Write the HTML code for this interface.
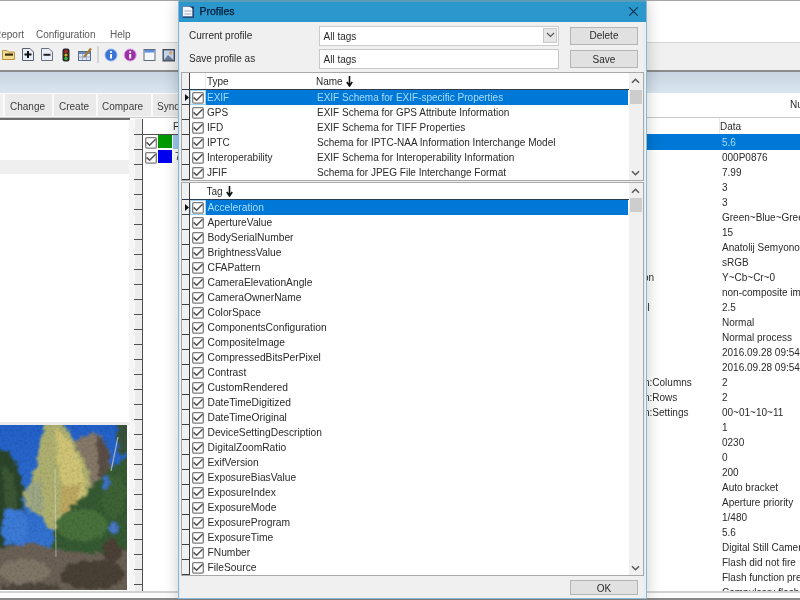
<!DOCTYPE html>
<html><head><meta charset="utf-8">
<style>
*{margin:0;padding:0;box-sizing:border-box}
html,body{width:800px;height:600px;overflow:hidden;background:#fff}
body{position:relative;font-family:"Liberation Sans",sans-serif;font-size:10px;color:#2a2a2a}
.a{position:absolute}
.t{position:absolute;white-space:nowrap;line-height:15px;height:15px}
#root{position:absolute;left:0;top:0;width:800px;height:600px;will-change:transform}
</style></head><body><div id="root">
<div class="a" style="left:0px;top:0px;width:800px;height:1px;background:#a6a6a6"></div>
<div class="a" style="left:0px;top:1px;width:800px;height:41px;background:#fff"></div>
<div class="t" style="left:-6px;top:27px;color:#5a5a5a">Report</div>
<div class="t" style="left:36px;top:27px;color:#5a5a5a">Configuration</div>
<div class="t" style="left:110px;top:27px;color:#5a5a5a">Help</div>
<div class="a" style="left:0px;top:42px;width:800px;height:1px;background:#d4d4d4"></div>
<div class="a" style="left:0px;top:43px;width:800px;height:27px;background:#f0f0f0"></div>
<div class="a" style="left:0px;top:70px;width:800px;height:2px;background:#8c8c8c"></div>
<div class="a" style="left:0px;top:72px;width:800px;height:21px;background:linear-gradient(#c8d5e2,#dae5ef)"></div>
<svg class="a" style="left:0;top:44px" width="180" height="24" viewBox="0 44 180 24"><path d="M2.5 50.5 H7 L8.5 52 H14.5 V59.5 H2.5Z" fill="#f3dc94" stroke="#b8953e"/><rect x="5" y="53.5" width="8" height="2.2" fill="#3b2c05"/><path d="M22.5 48.5 H30 L33.5 52 V60.5 H22.5Z" fill="#e9eef8" stroke="#5a6070"/><path d="M24.5 54.5 H31.5 M28 51 V58" stroke="#111" stroke-width="2"/><path d="M41.5 48.5 H49 L52.5 52 V60.5 H41.5Z" fill="#e9eef8" stroke="#6a7080"/><path d="M43.5 54.8 H50.5" stroke="#222" stroke-width="2"/><rect x="62.5" y="48.5" width="7" height="13" rx="2" fill="#2a2a2a"/><circle cx="66" cy="51.5" r="1.6" fill="#d02020"/><circle cx="66" cy="55" r="1.6" fill="#d8b020"/><circle cx="66" cy="58.5" r="1.7" fill="#30c030"/><rect x="78.5" y="51.5" width="12" height="9" fill="#dfe8f6" stroke="#5a6a8a"/><rect x="79" y="52" width="11" height="2" fill="#6c8cc0"/><path d="M82.5 54 V60 M86.5 54 V60 M79 57 H90" stroke="#8aa0c8" stroke-width="0.8"/><path d="M84 57 L91 48.5" stroke="#a87a30" stroke-width="2.2"/><rect x="97.5" y="46" width="1" height="17" fill="#b9b9b9"/><circle cx="111" cy="55" r="6" fill="#3a74d6" stroke="#8fb0ec" stroke-width="1"/><rect x="110" y="54" width="2" height="4.5" fill="#fff"/><circle cx="111" cy="52" r="1.1" fill="#fff"/><circle cx="130.2" cy="55" r="6" fill="#9a2fa8" stroke="#d99be0" stroke-width="1"/><rect x="129.2" y="54" width="2" height="4.5" fill="#fff"/><circle cx="130.2" cy="52" r="1.1" fill="#fff"/><rect x="144" y="49.5" width="11" height="11" fill="#f4f7fc" stroke="#606a7a"/><rect x="144.5" y="50" width="10" height="2.5" fill="#5a8ee0"/><rect x="163" y="49.5" width="11.5" height="11.5" fill="#5a6a80" stroke="#444c5a"/><rect x="164" y="50.5" width="9.5" height="9.5" fill="#c8d8ec"/><circle cx="170.5" cy="52.8" r="1.6" fill="#e0a070"/><path d="M164 60 L168 55 L173.5 60Z" fill="#6a7a98"/></svg>
<div class="a" style="left:0px;top:93px;width:800px;height:25px;background:#fff"></div>
<div class="a" style="left:0px;top:93px;width:178px;height:24px;background:#f0f0f0"></div>
<div class="a" style="left:0px;top:93px;width:178px;height:1px;background:#fbfbfb"></div>
<div class="a" style="left:3px;top:94px;width:49px;height:22px;background:#eaeaea;border-left:2px solid #fafafa"></div>
<div class="a" style="left:52px;top:94px;width:44px;height:22px;background:#eaeaea;border-left:2px solid #fafafa"></div>
<div class="a" style="left:96px;top:94px;width:55px;height:22px;background:#eaeaea;border-left:2px solid #fafafa"></div>
<div class="a" style="left:151px;top:94px;width:40px;height:22px;background:#eaeaea;border-left:2px solid #fafafa"></div>
<div class="a" style="left:0px;top:116px;width:178px;height:2px;background:#f8f8f8"></div>
<div class="t" style="left:10px;top:99px;color:#3c3c3c">Change</div>
<div class="t" style="left:59px;top:99px;color:#3c3c3c">Create</div>
<div class="t" style="left:102px;top:99px;color:#3c3c3c">Compare</div>
<div class="t" style="left:157px;top:99px;color:#3c3c3c">Sync</div>
<div class="t" style="left:790px;top:97px;">Nu</div>
<div class="a" style="left:0px;top:117px;width:800px;height:1px;background:#c9c9c9"></div>
<div class="a" style="left:0px;top:118px;width:130px;height:2px;background:#6e6e6e"></div>
<div class="a" style="left:129px;top:120px;width:5px;height:472px;background:#f6f6f6"></div>
<div class="a" style="left:0px;top:422px;width:129px;height:3px;background:#ebebeb"></div>
<div class="a" style="left:0px;top:160px;width:129px;height:14px;background:#efefef"></div>
<div class="a" style="left:134px;top:119px;width:9px;height:473px;background:#ececec;border-left:1px solid #fafafa"></div>
<div class="a" style="left:142px;top:119px;width:1px;height:473px;background:#505050"></div>
<div class="a" style="left:134px;top:134px;width:9px;height:1px;background:#505050"></div>
<div class="a" style="left:134px;top:149px;width:9px;height:1px;background:#505050"></div>
<div class="a" style="left:134px;top:164px;width:9px;height:1px;background:#505050"></div>
<div class="a" style="left:134px;top:179px;width:9px;height:1px;background:#505050"></div>
<div class="a" style="left:134px;top:194px;width:9px;height:1px;background:#505050"></div>
<div class="a" style="left:134px;top:209px;width:9px;height:1px;background:#505050"></div>
<div class="a" style="left:134px;top:224px;width:9px;height:1px;background:#505050"></div>
<div class="a" style="left:134px;top:239px;width:9px;height:1px;background:#505050"></div>
<div class="a" style="left:134px;top:254px;width:9px;height:1px;background:#505050"></div>
<div class="a" style="left:134px;top:269px;width:9px;height:1px;background:#505050"></div>
<div class="a" style="left:134px;top:284px;width:9px;height:1px;background:#505050"></div>
<div class="a" style="left:134px;top:299px;width:9px;height:1px;background:#505050"></div>
<div class="a" style="left:134px;top:314px;width:9px;height:1px;background:#505050"></div>
<div class="a" style="left:134px;top:329px;width:9px;height:1px;background:#505050"></div>
<div class="a" style="left:134px;top:344px;width:9px;height:1px;background:#505050"></div>
<div class="a" style="left:134px;top:359px;width:9px;height:1px;background:#505050"></div>
<div class="a" style="left:134px;top:374px;width:9px;height:1px;background:#505050"></div>
<div class="a" style="left:134px;top:389px;width:9px;height:1px;background:#505050"></div>
<div class="a" style="left:134px;top:404px;width:9px;height:1px;background:#505050"></div>
<div class="a" style="left:134px;top:419px;width:9px;height:1px;background:#505050"></div>
<div class="a" style="left:134px;top:434px;width:9px;height:1px;background:#505050"></div>
<div class="a" style="left:134px;top:449px;width:9px;height:1px;background:#505050"></div>
<div class="a" style="left:134px;top:464px;width:9px;height:1px;background:#505050"></div>
<div class="a" style="left:134px;top:479px;width:9px;height:1px;background:#505050"></div>
<div class="a" style="left:134px;top:494px;width:9px;height:1px;background:#505050"></div>
<div class="a" style="left:134px;top:509px;width:9px;height:1px;background:#505050"></div>
<div class="a" style="left:134px;top:524px;width:9px;height:1px;background:#505050"></div>
<div class="a" style="left:134px;top:539px;width:9px;height:1px;background:#505050"></div>
<div class="a" style="left:134px;top:554px;width:9px;height:1px;background:#505050"></div>
<div class="a" style="left:134px;top:569px;width:9px;height:1px;background:#505050"></div>
<div class="a" style="left:134px;top:584px;width:9px;height:1px;background:#505050"></div>
<div class="a" style="left:143px;top:134px;width:35px;height:1px;background:#505050"></div>
<svg class="a" style="left:145px;top:137px" width="12" height="12" viewBox="0 0 12 12"><rect x="0.7" y="0.7" width="10.6" height="10.4" rx="1" fill="#fff" stroke="#7c7c7c" stroke-width="1.3"/><path d="M1.6 5.4 L4.6 8.3 L10.6 2.3" fill="none" stroke="#505050" stroke-width="1.5"/></svg>
<div class="a" style="left:158px;top:135px;width:14px;height:13px;background:#009a00"></div>
<svg class="a" style="left:145px;top:152px" width="12" height="12" viewBox="0 0 12 12"><rect x="0.7" y="0.7" width="10.6" height="10.4" rx="1" fill="#fff" stroke="#7c7c7c" stroke-width="1.3"/><path d="M1.6 5.4 L4.6 8.3 L10.6 2.3" fill="none" stroke="#505050" stroke-width="1.5"/></svg>
<div class="a" style="left:158px;top:150px;width:14px;height:13px;background:#0000f0"></div>
<div class="a" style="left:173px;top:135px;width:5px;height:14px;background:#9ccbf0"></div>
<div class="t" style="left:173px;top:119px;">F</div>
<div class="t" style="left:175px;top:149px;">7</div>
<div class="a" style="left:719px;top:118px;width:1px;height:16px;background:#e8e8e8"></div>
<div class="t" style="left:720px;top:119px;">Data</div>
<div class="a" style="left:646px;top:134px;width:154px;height:16px;background:#0078d7"></div>
<div class="a" style="left:646px;top:0;width:154px;height:591px;overflow:hidden">
<div class="t" style="left:76px;top:135px;color:#a6dcff">5.6</div>
<div class="t" style="left:76px;top:150px;">000P0876</div>
<div class="t" style="left:76px;top:165px;">7.99</div>
<div class="t" style="left:76px;top:180px;">3</div>
<div class="t" style="left:76px;top:195px;">3</div>
<div class="t" style="left:76px;top:210px;">Green~Blue~Green~Red</div>
<div class="t" style="left:76px;top:225px;">15</div>
<div class="t" style="left:76px;top:240px;">Anatolij Semyonov</div>
<div class="t" style="left:76px;top:255px;">sRGB</div>
<div class="t" style="left:76px;top:270px;">Y~Cb~Cr~0</div>
<div class="t" style="left:76px;top:285px;">non-composite image</div>
<div class="t" style="left:76px;top:300px;">2.5</div>
<div class="t" style="left:76px;top:315px;">Normal</div>
<div class="t" style="left:76px;top:330px;">Normal process</div>
<div class="t" style="left:76px;top:345px;">2016.09.28 09:54:11</div>
<div class="t" style="left:76px;top:360px;">2016.09.28 09:54:11</div>
<div class="t" style="left:76px;top:375px;">2</div>
<div class="t" style="left:76px;top:390px;">2</div>
<div class="t" style="left:76px;top:405px;">00~01~10~11</div>
<div class="t" style="left:76px;top:420px;">1</div>
<div class="t" style="left:76px;top:435px;">0230</div>
<div class="t" style="left:76px;top:450px;">0</div>
<div class="t" style="left:76px;top:465px;">200</div>
<div class="t" style="left:76px;top:480px;">Auto bracket</div>
<div class="t" style="left:76px;top:495px;">Aperture priority</div>
<div class="t" style="left:76px;top:510px;">1/480</div>
<div class="t" style="left:76px;top:525px;">5.6</div>
<div class="t" style="left:76px;top:540px;">Digital Still Camera</div>
<div class="t" style="left:76px;top:555px;">Flash did not fire</div>
<div class="t" style="left:76px;top:570px;">Flash function present</div>
<div class="t" style="left:76px;top:585px;">Compulsory flash</div>
</div>
<div class="a" style="left:646px;top:134px;width:74px;height:460px;overflow:hidden">
<div class="t" style="left:-3px;top:136px">on</div>
<div class="t" style="left:-4px;top:166px">el</div>
<div class="t" style="left:-2px;top:241px">n:Columns</div>
<div class="t" style="left:-2px;top:256px">n:Rows</div>
<div class="t" style="left:-2px;top:271px">n:Settings</div>
</div>
<div class="a" style="left:0px;top:591px;width:800px;height:2px;background:#d2d2d2"></div>
<div class="a" style="left:0px;top:593px;width:800px;height:5px;background:#fbfbfb"></div>
<div class="a" style="left:0px;top:598px;width:800px;height:2px;background:#888"></div>
<svg class="a" style="left:0;top:425px" width="127" height="165" viewBox="0 0 127 165"><defs><filter id="bl" x="-20%" y="-20%" width="140%" height="140%"><feTurbulence type="fractalNoise" baseFrequency="0.18" numOctaves="2" seed="7" result="n"/><feDisplacementMap in="SourceGraphic" in2="n" scale="9" xChannelSelector="R" yChannelSelector="G" result="d"/><feGaussianBlur in="d" stdDeviation="0.9"/></filter><filter id="tx"><feTurbulence type="fractalNoise" baseFrequency="0.4" numOctaves="2" seed="5"/><feColorMatrix values="0 0 0 0 0  0 0 0 0 0  0 0 0 0 0  0 0 0 -2 1.1"/></filter><linearGradient id="sky" x1="0" y1="0" x2="0" y2="1"><stop offset="0" stop-color="#2260c8"/><stop offset="1" stop-color="#3a7ad4"/></linearGradient></defs><rect width="127" height="165" fill="url(#sky)"/><rect y="128" width="127" height="40" fill="#6a6054"/><rect y="40" width="6" height="60" fill="#2c442a"/><g filter="url(#bl)"><path d="M76 14 L92 9 L102 11 L110 30 L108 58 L100 80 L84 92 L70 80 L72 40Z" fill="#857868"/><path d="M96 11 L104 14 L110 32 L106 60 L98 50Z" fill="#5a4e44"/><path d="M-4 22 L8 26 L18 42 L23 64 L24 92 L20 112 L10 126 L-4 126Z" fill="#2c442a"/><path d="M2 40 L14 50 L18 80 L6 95Z" fill="#3a5634"/><path d="M46 -4 L60 -4 L68 6 L76 20 L84 36 L90 52 L90 72 L82 90 L72 102 L60 108 L48 102 L40 90 L28 82 L22 68 L30 58 L36 40 L40 20Z" fill="#aeb070"/><path d="M56 4 L70 16 L80 36 L86 58 L80 80 L66 76 L58 46Z" fill="#cfc474"/><path d="M62 60 L80 60 L76 90 L60 92Z" fill="#bca860"/><path d="M26 62 L40 54 L44 82 L30 86Z" fill="#9aa684"/><path d="M4 86 L22 84 L28 100 L24 118 L6 120 L2 104Z" fill="#3a7ad6"/><path d="M54 106 L64 88 L80 74 L96 58 L108 44 L131 30 L131 140 L50 140Z" fill="#355a30"/><ellipse cx="82" cy="100" rx="26" ry="16" fill="#46703a"/><ellipse cx="114" cy="72" rx="12" ry="22" fill="#3c6236"/><ellipse cx="114" cy="104" rx="6" ry="5" fill="#4878c8"/><path d="M116 -4 L131 -4 L131 24 L119 32Z" fill="#38523a"/><ellipse cx="106" cy="58" rx="3.5" ry="6" fill="#3a74cc"/><path d="M-4 124 L30 118 L55 124 L80 128 L131 126 L131 170 L-4 170Z" fill="#6a6054"/><ellipse cx="24" cy="146" rx="26" ry="12" fill="#7e7466"/><ellipse cx="92" cy="150" rx="32" ry="15" fill="#4a4036"/><ellipse cx="30" cy="163" rx="30" ry="5" fill="#4e463e"/><ellipse cx="112" cy="126" rx="10" ry="12" fill="#4c4036"/></g><path d="M55 44 L56 132" stroke="#d8d8cc" stroke-width="1.2" opacity="0.5"/><path d="M118 12 L111 46" stroke="#cfcfc4" stroke-width="1.2" opacity="0.8"/><rect width="127" height="165" filter="url(#tx)" opacity="0.15"/></svg>
<div class="a" style="left:178px;top:0px;width:469px;height:599px;background:#f0f0f0;border:1px solid #8fb6d0;box-shadow:0 0 14px rgba(0,0,0,0.22)"></div>
<div class="a" style="left:179px;top:22px;width:466px;height:576px;border-left:1px solid #d6eef8;border-right:1px solid #d6eef8"></div>
<div class="a" style="left:179px;top:0px;width:467px;height:22px;background:#2a97cd"></div>
<div class="a" style="left:179px;top:0px;width:467px;height:2px;background:#5a9cb8"></div>
<div class="t" style="left:199.5px;top:4px;font-size:10.5px;color:#031a33;-webkit-text-stroke:0.25px #031a33">Profiles</div>
<svg class="a" style="left:628px;top:6px" width="11" height="11" viewBox="0 0 11 11"><path d="M1.3 1.3 L9.7 9.7 M9.7 1.3 L1.3 9.7" stroke="#0b3350" stroke-width="1.2"/></svg>
<svg class="a" style="left:182px;top:6px" width="12" height="12" viewBox="0 0 12 12"><rect x="0.5" y="0.5" width="10.5" height="10.5" fill="#f2f8ff" stroke="#5a7aa8" stroke-width="0.8"/><path d="M11.2 1 V11.2 H1" fill="none" stroke="#1a3a6a" stroke-width="1.3"/><path d="M7 0.5 H11.5 V3.5 L10 2Z" fill="#1a3050"/><path d="M2.5 5 H9.5 M2.5 8 H9.5" stroke="#a89ab0" stroke-width="0.9"/></svg>
<div class="t" style="left:189px;top:28px;">Current profile</div>
<div class="t" style="left:189px;top:50.5px;">Save profile as</div>
<div class="a" style="left:319px;top:26px;width:240px;height:20px;background:#fff;border:1px solid #cacaca"></div>
<div class="a" style="left:543px;top:28px;width:14px;height:15px;background:#e6e6e6;border:1px solid #c9c9c9"></div>
<svg class="a" style="left:546px;top:32px" width="9" height="6" viewBox="0 0 9 6"><path d="M1 1 L4.5 4.5 L8 1" fill="none" stroke="#555" stroke-width="1.1"/></svg>
<div class="t" style="left:323.5px;top:29px;">All tags</div>
<div class="a" style="left:319px;top:49px;width:240px;height:20px;background:#fff;border:1px solid #c8c8c8"></div>
<div class="t" style="left:323.5px;top:52px;">All tags</div>
<div class="a" style="left:570px;top:27px;width:68px;height:18px;background:#e1e1e1;border:1px solid #b5b5b5"></div>
<div class="t" style="left:570px;top:28px;width:68px;text-align:center">Delete</div>
<div class="a" style="left:570px;top:50px;width:68px;height:18px;background:#e1e1e1;border:1px solid #b5b5b5"></div>
<div class="t" style="left:570px;top:51.5px;width:68px;text-align:center">Save</div>
<div class="a" style="left:570px;top:580px;width:68px;height:15px;background:#e1e1e1;border:1px solid #b5b5b5"></div>
<div class="t" style="left:570px;top:581px;width:68px;text-align:center">OK</div>
<div class="a" style="left:181px;top:72px;width:463px;height:109px;background:#fff;border:1px solid #a9a9a9"></div>
<div class="a" style="left:182px;top:73px;width:8px;height:107px;background:#f0f0f0"></div>
<div class="a" style="left:189px;top:73px;width:1px;height:107px;background:#3c3c3c"></div>
<div class="a" style="left:182px;top:89px;width:447px;height:1px;background:#2c3c50"></div>
<div class="a" style="left:182px;top:104px;width:8px;height:1px;background:#3c3c3c"></div>
<div class="a" style="left:182px;top:119px;width:8px;height:1px;background:#3c3c3c"></div>
<div class="a" style="left:182px;top:134px;width:8px;height:1px;background:#3c3c3c"></div>
<div class="a" style="left:182px;top:149px;width:8px;height:1px;background:#3c3c3c"></div>
<div class="a" style="left:182px;top:164px;width:8px;height:1px;background:#3c3c3c"></div>
<div class="a" style="left:182px;top:179px;width:8px;height:1px;background:#3c3c3c"></div>
<div class="a" style="left:205px;top:73px;width:1px;height:16px;background:#e8e8e8"></div>
<div class="t" style="left:207px;top:74px;">Type</div>
<div class="t" style="left:316px;top:74px;">Name</div>
<div class="a" style="left:629px;top:73px;width:14px;height:107px;background:#f0f0f0"></div>
<svg class="a" style="left:631px;top:78px" width="9" height="6" viewBox="0 0 9 6"><path d="M1 4.8 L4.5 1.3 L8 4.8" fill="none" stroke="#5a5a5a" stroke-width="1.6"/></svg>
<svg class="a" style="left:631px;top:170px" width="9" height="6" viewBox="0 0 9 6"><path d="M1 1.2 L4.5 4.7 L8 1.2" fill="none" stroke="#5a5a5a" stroke-width="1.6"/></svg>
<div class="a" style="left:630px;top:90px;width:12px;height:14px;background:#cdcdcd"></div>
<div class="a" style="left:206px;top:90px;width:422px;height:15px;background:#0078d7"></div>
<div class="a" style="left:190px;top:90px;width:16px;height:15px;background:#fff;border:1px solid #9fd0f5"></div>
<svg class="a" style="left:185px;top:94px" width="4" height="7" viewBox="0 0 4 7"><path d="M0 0 L4 3.5 L0 7Z" fill="#111"/></svg>
<svg class="a" style="left:192px;top:92px" width="12" height="12" viewBox="0 0 12 12"><rect x="0.7" y="0.7" width="10.6" height="10.4" rx="1" fill="#fff" stroke="#7c7c7c" stroke-width="1.3"/><path d="M1.6 5.4 L4.6 8.3 L10.6 2.3" fill="none" stroke="#505050" stroke-width="1.5"/></svg>
<div class="t" style="left:207px;top:90px;color:#a6dcff">EXIF</div>
<div class="t" style="left:317px;top:90px;color:#a6dcff">EXIF Schema for EXIF-specific Properties</div>
<svg class="a" style="left:192px;top:107px" width="12" height="12" viewBox="0 0 12 12"><rect x="0.7" y="0.7" width="10.6" height="10.4" rx="1" fill="#fff" stroke="#7c7c7c" stroke-width="1.3"/><path d="M1.6 5.4 L4.6 8.3 L10.6 2.3" fill="none" stroke="#505050" stroke-width="1.5"/></svg>
<div class="t" style="left:207px;top:105px;">GPS</div>
<div class="t" style="left:317px;top:105px;">EXIF Schema for GPS Attribute Information</div>
<svg class="a" style="left:192px;top:122px" width="12" height="12" viewBox="0 0 12 12"><rect x="0.7" y="0.7" width="10.6" height="10.4" rx="1" fill="#fff" stroke="#7c7c7c" stroke-width="1.3"/><path d="M1.6 5.4 L4.6 8.3 L10.6 2.3" fill="none" stroke="#505050" stroke-width="1.5"/></svg>
<div class="t" style="left:207px;top:120px;">IFD</div>
<div class="t" style="left:317px;top:120px;">EXIF Schema for TIFF Properties</div>
<svg class="a" style="left:192px;top:137px" width="12" height="12" viewBox="0 0 12 12"><rect x="0.7" y="0.7" width="10.6" height="10.4" rx="1" fill="#fff" stroke="#7c7c7c" stroke-width="1.3"/><path d="M1.6 5.4 L4.6 8.3 L10.6 2.3" fill="none" stroke="#505050" stroke-width="1.5"/></svg>
<div class="t" style="left:207px;top:135px;">IPTC</div>
<div class="t" style="left:317px;top:135px;">Schema for IPTC-NAA Information Interchange Model</div>
<svg class="a" style="left:192px;top:152px" width="12" height="12" viewBox="0 0 12 12"><rect x="0.7" y="0.7" width="10.6" height="10.4" rx="1" fill="#fff" stroke="#7c7c7c" stroke-width="1.3"/><path d="M1.6 5.4 L4.6 8.3 L10.6 2.3" fill="none" stroke="#505050" stroke-width="1.5"/></svg>
<div class="t" style="left:207px;top:150px;">Interoperability</div>
<div class="t" style="left:317px;top:150px;">EXIF Schema for Interoperability Information</div>
<svg class="a" style="left:192px;top:167px" width="12" height="12" viewBox="0 0 12 12"><rect x="0.7" y="0.7" width="10.6" height="10.4" rx="1" fill="#fff" stroke="#7c7c7c" stroke-width="1.3"/><path d="M1.6 5.4 L4.6 8.3 L10.6 2.3" fill="none" stroke="#505050" stroke-width="1.5"/></svg>
<div class="t" style="left:207px;top:165px;">JFIF</div>
<div class="t" style="left:317px;top:165px;">Schema for JPEG File Interchange Format</div>
<svg class="a" style="left:346px;top:76px" width="7" height="11" viewBox="0 0 7 11"><path d="M3.5 0V9 M0.8 6 L3.5 10 L6.2 6" fill="none" stroke="#111" stroke-width="1.6"/></svg>
<div class="a" style="left:181px;top:182px;width:463px;height:394px;background:#fff;border:1px solid #a9a9a9"></div>
<div class="a" style="left:182px;top:183px;width:8px;height:392px;background:#f0f0f0"></div>
<div class="a" style="left:189px;top:183px;width:1px;height:392px;background:#3c3c3c"></div>
<div class="a" style="left:182px;top:199px;width:447px;height:1px;background:#2c3c50"></div>
<div class="a" style="left:182px;top:214px;width:8px;height:1px;background:#3c3c3c"></div>
<div class="a" style="left:182px;top:229px;width:8px;height:1px;background:#3c3c3c"></div>
<div class="a" style="left:182px;top:244px;width:8px;height:1px;background:#3c3c3c"></div>
<div class="a" style="left:182px;top:259px;width:8px;height:1px;background:#3c3c3c"></div>
<div class="a" style="left:182px;top:274px;width:8px;height:1px;background:#3c3c3c"></div>
<div class="a" style="left:182px;top:289px;width:8px;height:1px;background:#3c3c3c"></div>
<div class="a" style="left:182px;top:304px;width:8px;height:1px;background:#3c3c3c"></div>
<div class="a" style="left:182px;top:319px;width:8px;height:1px;background:#3c3c3c"></div>
<div class="a" style="left:182px;top:334px;width:8px;height:1px;background:#3c3c3c"></div>
<div class="a" style="left:182px;top:349px;width:8px;height:1px;background:#3c3c3c"></div>
<div class="a" style="left:182px;top:364px;width:8px;height:1px;background:#3c3c3c"></div>
<div class="a" style="left:182px;top:379px;width:8px;height:1px;background:#3c3c3c"></div>
<div class="a" style="left:182px;top:394px;width:8px;height:1px;background:#3c3c3c"></div>
<div class="a" style="left:182px;top:409px;width:8px;height:1px;background:#3c3c3c"></div>
<div class="a" style="left:182px;top:424px;width:8px;height:1px;background:#3c3c3c"></div>
<div class="a" style="left:182px;top:439px;width:8px;height:1px;background:#3c3c3c"></div>
<div class="a" style="left:182px;top:454px;width:8px;height:1px;background:#3c3c3c"></div>
<div class="a" style="left:182px;top:469px;width:8px;height:1px;background:#3c3c3c"></div>
<div class="a" style="left:182px;top:484px;width:8px;height:1px;background:#3c3c3c"></div>
<div class="a" style="left:182px;top:499px;width:8px;height:1px;background:#3c3c3c"></div>
<div class="a" style="left:182px;top:514px;width:8px;height:1px;background:#3c3c3c"></div>
<div class="a" style="left:182px;top:529px;width:8px;height:1px;background:#3c3c3c"></div>
<div class="a" style="left:182px;top:544px;width:8px;height:1px;background:#3c3c3c"></div>
<div class="a" style="left:182px;top:559px;width:8px;height:1px;background:#3c3c3c"></div>
<div class="a" style="left:182px;top:574px;width:8px;height:1px;background:#3c3c3c"></div>
<div class="t" style="left:206.5px;top:184px;">Tag</div>
<div class="a" style="left:629px;top:183px;width:14px;height:392px;background:#f0f0f0"></div>
<svg class="a" style="left:631px;top:188px" width="9" height="6" viewBox="0 0 9 6"><path d="M1 4.8 L4.5 1.3 L8 4.8" fill="none" stroke="#5a5a5a" stroke-width="1.6"/></svg>
<svg class="a" style="left:631px;top:565px" width="9" height="6" viewBox="0 0 9 6"><path d="M1 1.2 L4.5 4.7 L8 1.2" fill="none" stroke="#5a5a5a" stroke-width="1.6"/></svg>
<div class="a" style="left:630px;top:198px;width:12px;height:14px;background:#cdcdcd"></div>
<div class="a" style="left:206px;top:200px;width:422px;height:15px;background:#0078d7"></div>
<div class="a" style="left:190px;top:200px;width:16px;height:15px;background:#fff;border:1px solid #9fd0f5"></div>
<svg class="a" style="left:185px;top:204px" width="4" height="7" viewBox="0 0 4 7"><path d="M0 0 L4 3.5 L0 7Z" fill="#111"/></svg>
<svg class="a" style="left:192px;top:202px" width="12" height="12" viewBox="0 0 12 12"><rect x="0.7" y="0.7" width="10.6" height="10.4" rx="1" fill="#fff" stroke="#7c7c7c" stroke-width="1.3"/><path d="M1.6 5.4 L4.6 8.3 L10.6 2.3" fill="none" stroke="#505050" stroke-width="1.5"/></svg>
<div class="t" style="left:207.5px;top:200px;color:#a6dcff;font-size:10.25px">Acceleration</div>
<svg class="a" style="left:192px;top:217px" width="12" height="12" viewBox="0 0 12 12"><rect x="0.7" y="0.7" width="10.6" height="10.4" rx="1" fill="#fff" stroke="#7c7c7c" stroke-width="1.3"/><path d="M1.6 5.4 L4.6 8.3 L10.6 2.3" fill="none" stroke="#505050" stroke-width="1.5"/></svg>
<div class="t" style="left:207.5px;top:215px;;font-size:10.25px">ApertureValue</div>
<svg class="a" style="left:192px;top:232px" width="12" height="12" viewBox="0 0 12 12"><rect x="0.7" y="0.7" width="10.6" height="10.4" rx="1" fill="#fff" stroke="#7c7c7c" stroke-width="1.3"/><path d="M1.6 5.4 L4.6 8.3 L10.6 2.3" fill="none" stroke="#505050" stroke-width="1.5"/></svg>
<div class="t" style="left:207.5px;top:230px;;font-size:10.25px">BodySerialNumber</div>
<svg class="a" style="left:192px;top:247px" width="12" height="12" viewBox="0 0 12 12"><rect x="0.7" y="0.7" width="10.6" height="10.4" rx="1" fill="#fff" stroke="#7c7c7c" stroke-width="1.3"/><path d="M1.6 5.4 L4.6 8.3 L10.6 2.3" fill="none" stroke="#505050" stroke-width="1.5"/></svg>
<div class="t" style="left:207.5px;top:245px;;font-size:10.25px">BrightnessValue</div>
<svg class="a" style="left:192px;top:262px" width="12" height="12" viewBox="0 0 12 12"><rect x="0.7" y="0.7" width="10.6" height="10.4" rx="1" fill="#fff" stroke="#7c7c7c" stroke-width="1.3"/><path d="M1.6 5.4 L4.6 8.3 L10.6 2.3" fill="none" stroke="#505050" stroke-width="1.5"/></svg>
<div class="t" style="left:207.5px;top:260px;;font-size:10.25px">CFAPattern</div>
<svg class="a" style="left:192px;top:277px" width="12" height="12" viewBox="0 0 12 12"><rect x="0.7" y="0.7" width="10.6" height="10.4" rx="1" fill="#fff" stroke="#7c7c7c" stroke-width="1.3"/><path d="M1.6 5.4 L4.6 8.3 L10.6 2.3" fill="none" stroke="#505050" stroke-width="1.5"/></svg>
<div class="t" style="left:207.5px;top:275px;;font-size:10.25px">CameraElevationAngle</div>
<svg class="a" style="left:192px;top:292px" width="12" height="12" viewBox="0 0 12 12"><rect x="0.7" y="0.7" width="10.6" height="10.4" rx="1" fill="#fff" stroke="#7c7c7c" stroke-width="1.3"/><path d="M1.6 5.4 L4.6 8.3 L10.6 2.3" fill="none" stroke="#505050" stroke-width="1.5"/></svg>
<div class="t" style="left:207.5px;top:290px;;font-size:10.25px">CameraOwnerName</div>
<svg class="a" style="left:192px;top:307px" width="12" height="12" viewBox="0 0 12 12"><rect x="0.7" y="0.7" width="10.6" height="10.4" rx="1" fill="#fff" stroke="#7c7c7c" stroke-width="1.3"/><path d="M1.6 5.4 L4.6 8.3 L10.6 2.3" fill="none" stroke="#505050" stroke-width="1.5"/></svg>
<div class="t" style="left:207.5px;top:305px;;font-size:10.25px">ColorSpace</div>
<svg class="a" style="left:192px;top:322px" width="12" height="12" viewBox="0 0 12 12"><rect x="0.7" y="0.7" width="10.6" height="10.4" rx="1" fill="#fff" stroke="#7c7c7c" stroke-width="1.3"/><path d="M1.6 5.4 L4.6 8.3 L10.6 2.3" fill="none" stroke="#505050" stroke-width="1.5"/></svg>
<div class="t" style="left:207.5px;top:320px;;font-size:10.25px">ComponentsConfiguration</div>
<svg class="a" style="left:192px;top:337px" width="12" height="12" viewBox="0 0 12 12"><rect x="0.7" y="0.7" width="10.6" height="10.4" rx="1" fill="#fff" stroke="#7c7c7c" stroke-width="1.3"/><path d="M1.6 5.4 L4.6 8.3 L10.6 2.3" fill="none" stroke="#505050" stroke-width="1.5"/></svg>
<div class="t" style="left:207.5px;top:335px;;font-size:10.25px">CompositeImage</div>
<svg class="a" style="left:192px;top:352px" width="12" height="12" viewBox="0 0 12 12"><rect x="0.7" y="0.7" width="10.6" height="10.4" rx="1" fill="#fff" stroke="#7c7c7c" stroke-width="1.3"/><path d="M1.6 5.4 L4.6 8.3 L10.6 2.3" fill="none" stroke="#505050" stroke-width="1.5"/></svg>
<div class="t" style="left:207.5px;top:350px;;font-size:10.25px">CompressedBitsPerPixel</div>
<svg class="a" style="left:192px;top:367px" width="12" height="12" viewBox="0 0 12 12"><rect x="0.7" y="0.7" width="10.6" height="10.4" rx="1" fill="#fff" stroke="#7c7c7c" stroke-width="1.3"/><path d="M1.6 5.4 L4.6 8.3 L10.6 2.3" fill="none" stroke="#505050" stroke-width="1.5"/></svg>
<div class="t" style="left:207.5px;top:365px;;font-size:10.25px">Contrast</div>
<svg class="a" style="left:192px;top:382px" width="12" height="12" viewBox="0 0 12 12"><rect x="0.7" y="0.7" width="10.6" height="10.4" rx="1" fill="#fff" stroke="#7c7c7c" stroke-width="1.3"/><path d="M1.6 5.4 L4.6 8.3 L10.6 2.3" fill="none" stroke="#505050" stroke-width="1.5"/></svg>
<div class="t" style="left:207.5px;top:380px;;font-size:10.25px">CustomRendered</div>
<svg class="a" style="left:192px;top:397px" width="12" height="12" viewBox="0 0 12 12"><rect x="0.7" y="0.7" width="10.6" height="10.4" rx="1" fill="#fff" stroke="#7c7c7c" stroke-width="1.3"/><path d="M1.6 5.4 L4.6 8.3 L10.6 2.3" fill="none" stroke="#505050" stroke-width="1.5"/></svg>
<div class="t" style="left:207.5px;top:395px;;font-size:10.25px">DateTimeDigitized</div>
<svg class="a" style="left:192px;top:412px" width="12" height="12" viewBox="0 0 12 12"><rect x="0.7" y="0.7" width="10.6" height="10.4" rx="1" fill="#fff" stroke="#7c7c7c" stroke-width="1.3"/><path d="M1.6 5.4 L4.6 8.3 L10.6 2.3" fill="none" stroke="#505050" stroke-width="1.5"/></svg>
<div class="t" style="left:207.5px;top:410px;;font-size:10.25px">DateTimeOriginal</div>
<svg class="a" style="left:192px;top:427px" width="12" height="12" viewBox="0 0 12 12"><rect x="0.7" y="0.7" width="10.6" height="10.4" rx="1" fill="#fff" stroke="#7c7c7c" stroke-width="1.3"/><path d="M1.6 5.4 L4.6 8.3 L10.6 2.3" fill="none" stroke="#505050" stroke-width="1.5"/></svg>
<div class="t" style="left:207.5px;top:425px;;font-size:10.25px">DeviceSettingDescription</div>
<svg class="a" style="left:192px;top:442px" width="12" height="12" viewBox="0 0 12 12"><rect x="0.7" y="0.7" width="10.6" height="10.4" rx="1" fill="#fff" stroke="#7c7c7c" stroke-width="1.3"/><path d="M1.6 5.4 L4.6 8.3 L10.6 2.3" fill="none" stroke="#505050" stroke-width="1.5"/></svg>
<div class="t" style="left:207.5px;top:440px;;font-size:10.25px">DigitalZoomRatio</div>
<svg class="a" style="left:192px;top:457px" width="12" height="12" viewBox="0 0 12 12"><rect x="0.7" y="0.7" width="10.6" height="10.4" rx="1" fill="#fff" stroke="#7c7c7c" stroke-width="1.3"/><path d="M1.6 5.4 L4.6 8.3 L10.6 2.3" fill="none" stroke="#505050" stroke-width="1.5"/></svg>
<div class="t" style="left:207.5px;top:455px;;font-size:10.25px">ExifVersion</div>
<svg class="a" style="left:192px;top:472px" width="12" height="12" viewBox="0 0 12 12"><rect x="0.7" y="0.7" width="10.6" height="10.4" rx="1" fill="#fff" stroke="#7c7c7c" stroke-width="1.3"/><path d="M1.6 5.4 L4.6 8.3 L10.6 2.3" fill="none" stroke="#505050" stroke-width="1.5"/></svg>
<div class="t" style="left:207.5px;top:470px;;font-size:10.25px">ExposureBiasValue</div>
<svg class="a" style="left:192px;top:487px" width="12" height="12" viewBox="0 0 12 12"><rect x="0.7" y="0.7" width="10.6" height="10.4" rx="1" fill="#fff" stroke="#7c7c7c" stroke-width="1.3"/><path d="M1.6 5.4 L4.6 8.3 L10.6 2.3" fill="none" stroke="#505050" stroke-width="1.5"/></svg>
<div class="t" style="left:207.5px;top:485px;;font-size:10.25px">ExposureIndex</div>
<svg class="a" style="left:192px;top:502px" width="12" height="12" viewBox="0 0 12 12"><rect x="0.7" y="0.7" width="10.6" height="10.4" rx="1" fill="#fff" stroke="#7c7c7c" stroke-width="1.3"/><path d="M1.6 5.4 L4.6 8.3 L10.6 2.3" fill="none" stroke="#505050" stroke-width="1.5"/></svg>
<div class="t" style="left:207.5px;top:500px;;font-size:10.25px">ExposureMode</div>
<svg class="a" style="left:192px;top:517px" width="12" height="12" viewBox="0 0 12 12"><rect x="0.7" y="0.7" width="10.6" height="10.4" rx="1" fill="#fff" stroke="#7c7c7c" stroke-width="1.3"/><path d="M1.6 5.4 L4.6 8.3 L10.6 2.3" fill="none" stroke="#505050" stroke-width="1.5"/></svg>
<div class="t" style="left:207.5px;top:515px;;font-size:10.25px">ExposureProgram</div>
<svg class="a" style="left:192px;top:532px" width="12" height="12" viewBox="0 0 12 12"><rect x="0.7" y="0.7" width="10.6" height="10.4" rx="1" fill="#fff" stroke="#7c7c7c" stroke-width="1.3"/><path d="M1.6 5.4 L4.6 8.3 L10.6 2.3" fill="none" stroke="#505050" stroke-width="1.5"/></svg>
<div class="t" style="left:207.5px;top:530px;;font-size:10.25px">ExposureTime</div>
<svg class="a" style="left:192px;top:547px" width="12" height="12" viewBox="0 0 12 12"><rect x="0.7" y="0.7" width="10.6" height="10.4" rx="1" fill="#fff" stroke="#7c7c7c" stroke-width="1.3"/><path d="M1.6 5.4 L4.6 8.3 L10.6 2.3" fill="none" stroke="#505050" stroke-width="1.5"/></svg>
<div class="t" style="left:207.5px;top:545px;;font-size:10.25px">FNumber</div>
<svg class="a" style="left:192px;top:562px" width="12" height="12" viewBox="0 0 12 12"><rect x="0.7" y="0.7" width="10.6" height="10.4" rx="1" fill="#fff" stroke="#7c7c7c" stroke-width="1.3"/><path d="M1.6 5.4 L4.6 8.3 L10.6 2.3" fill="none" stroke="#505050" stroke-width="1.5"/></svg>
<div class="t" style="left:207.5px;top:560px;;font-size:10.25px">FileSource</div>
<svg class="a" style="left:225.5px;top:185.5px" width="7" height="11" viewBox="0 0 7 11"><path d="M3.5 0V9 M0.8 6 L3.5 10 L6.2 6" fill="none" stroke="#111" stroke-width="1.6"/></svg>
</div></body></html>
